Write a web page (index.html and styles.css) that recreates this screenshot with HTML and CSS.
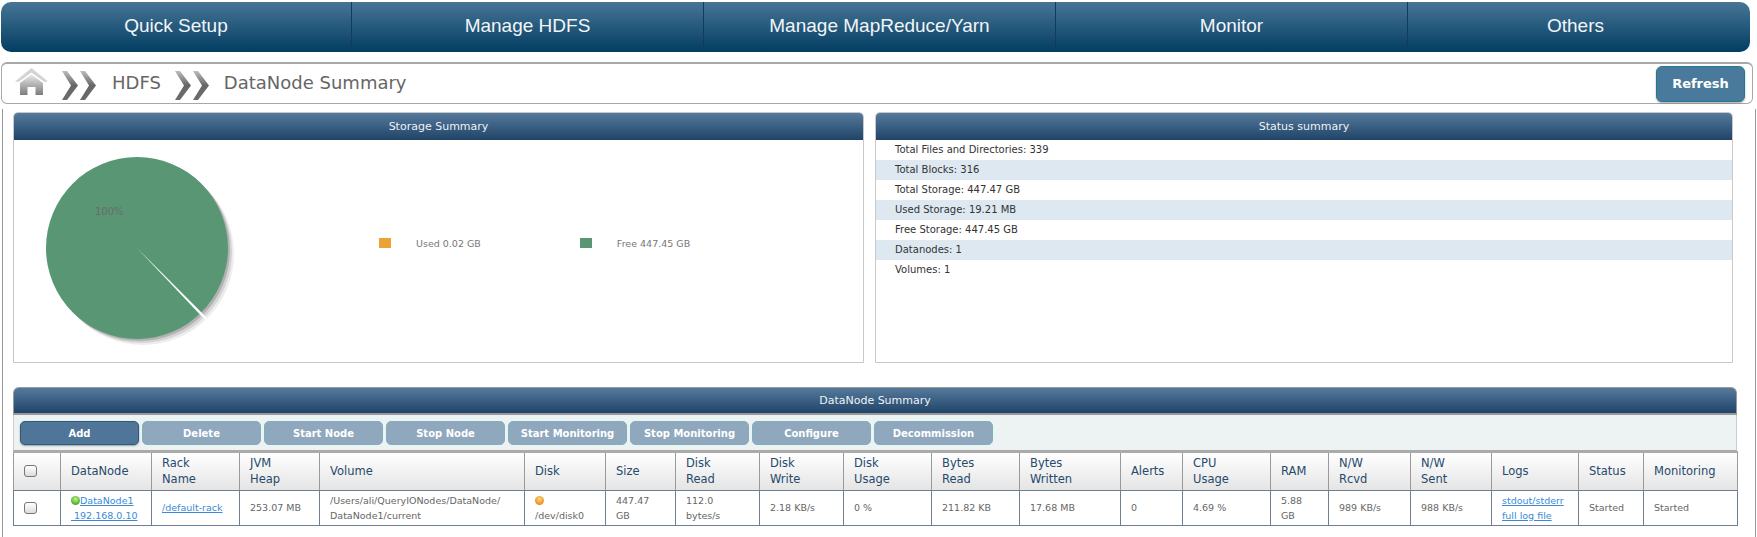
FILE: index.html
```html
<!DOCTYPE html>
<html lang="en">
<head>
<meta charset="utf-8">
<title>DataNode Summary</title>
<link rel="stylesheet" href="styles.css">
</head>
<body>
<nav class="topnav">
  <a class="topnav-item">Quick Setup</a>
  <a class="topnav-item">Manage HDFS</a>
  <a class="topnav-item">Manage MapReduce/Yarn</a>
  <a class="topnav-item">Monitor</a>
  <a class="topnav-item">Others</a>
</nav>
<header class="crumbs">
  <svg class="home" viewBox="0 0 33 27" aria-hidden="true">
    <defs>
      <linearGradient id="hg" x1="0" y1="0" x2="0" y2="1"><stop offset="0" stop-color="#e8e8e8"/><stop offset="1" stop-color="#7c7c7c"/></linearGradient>
    </defs>
    <path d="M16.5 0 L33 13.5 L29.5 14 L16.5 4.5 L3.5 14 L0 13.5 Z" fill="#d4d4d4"/>
    <path d="M16.5 6.5 L28 15 V27 H20.5 V19 H12.5 V27 H5 V15 Z" fill="url(#hg)"/>
  </svg>
  <svg class="chev" viewBox="0 0 34 29" aria-hidden="true">
    <defs>
      <linearGradient id="cg" x1="0" y1="0" x2="0" y2="1"><stop offset="0" stop-color="#bdbdbd"/><stop offset=".5" stop-color="#666"/><stop offset="1" stop-color="#6c6c6c"/></linearGradient>
    </defs>
    <path d="M0 0 H5 L16 14.5 L5 29 H0 L9 14.5 Z M18 0 H23 L34 14.5 L23 29 H18 L27 14.5 Z" fill="url(#cg)"/>
  </svg>
  <span class="crumb-text crumb-first">HDFS</span>
  <svg class="chev" viewBox="0 0 34 29" aria-hidden="true">
    <path d="M0 0 H5 L16 14.5 L5 29 H0 L9 14.5 Z M18 0 H23 L34 14.5 L23 29 H18 L27 14.5 Z" fill="url(#cg)"/>
  </svg>
  <span class="crumb-text crumb-last">DataNode Summary</span>
  <button class="refresh">Refresh</button>
</header>
<main class="content">
  <div class="panels">
    <section class="panel panel-storage">
      <h2 class="panel-title">Storage Summary</h2>
      <div class="storage-body">
        <div class="pie-wrap">
          <svg class="pie" viewBox="0 0 200 200" aria-hidden="true">
            <circle cx="97" cy="97" r="91" fill="#000" opacity=".07"/>
            <circle cx="95" cy="95" r="91" fill="#000" opacity=".1"/>
            <circle cx="93" cy="93" r="91" fill="#000" opacity=".16"/>
            <circle cx="91" cy="91" r="91" fill="#589674"/>
            <path d="M91 91 L161.5 165.5 L163.5 163.5 Z" fill="#fff"/>
          </svg>
          <span class="pie-label">100%</span>
        </div>
        <div class="legend">
          <div class="legend-item"><span class="swatch swatch-used"></span><span>Used 0.02 GB</span></div>
          <div class="legend-item"><span class="swatch swatch-free"></span><span>Free 447.45 GB</span></div>
        </div>
      </div>
    </section>
    <section class="panel panel-status">
      <h2 class="panel-title">Status summary</h2>
      <ul class="stats">
        <li>Total Files and Directories: 339</li>
        <li>Total Blocks: 316</li>
        <li>Total Storage: 447.47 GB</li>
        <li>Used Storage: 19.21 MB</li>
        <li>Free Storage: 447.45 GB</li>
        <li>Datanodes: 1</li>
        <li>Volumes: 1</li>
      </ul>
    </section>
  </div>
  <section class="summary">
    <h2 class="panel-title">DataNode Summary</h2>
    <div class="toolbar">
      <button class="tool tool-active">Add</button>
      <button class="tool">Delete</button>
      <button class="tool">Start Node</button>
      <button class="tool">Stop Node</button>
      <button class="tool">Start Monitoring</button>
      <button class="tool">Stop Monitoring</button>
      <button class="tool">Configure</button>
      <button class="tool">Decommission</button>
    </div>
    <table class="grid">
      <colgroup>
        <col class="c1"><col class="c2"><col class="c3"><col class="c4"><col class="c5">
        <col class="c6"><col class="c7"><col class="c8"><col class="c9"><col class="c10">
        <col class="c11"><col class="c12"><col class="c13"><col class="c14"><col class="c15">
        <col class="c16"><col class="c17"><col class="c18"><col class="c19"><col class="c20">
      </colgroup>
      <thead>
        <tr>
          <th class="check"><span class="box"></span></th>
          <th>DataNode</th><th>Rack<br>Name</th><th>JVM<br>Heap</th><th>Volume</th>
          <th>Disk</th><th>Size</th><th>Disk<br>Read</th><th>Disk<br>Write</th><th>Disk<br>Usage</th>
          <th>Bytes<br>Read</th><th>Bytes<br>Written</th><th>Alerts</th><th>CPU<br>Usage</th><th>RAM</th>
          <th>N/W<br>Rcvd</th><th>N/W<br>Sent</th><th>Logs</th><th>Status</th><th>Monitoring</th>
        </tr>
      </thead>
      <tbody>
        <tr>
          <td class="check"><span class="box"></span></td>
          <td><a href="#"><span class="dot dot-green"></span>DataNode1<br>&nbsp;192.168.0.10</a></td>
          <td><a href="#">/default-rack</a></td>
          <td>253.07 MB</td>
          <td>/Users/ali/QueryIONodes/DataNode/<br>DataNode1/current</td>
          <td><span class="dot dot-orange"></span><br>/dev/disk0</td>
          <td>447.47<br>GB</td>
          <td>112.0<br>bytes/s</td>
          <td>2.18 KB/s</td>
          <td>0 %</td>
          <td>211.82 KB</td>
          <td>17.68 MB</td>
          <td>0</td>
          <td>4.69 %</td>
          <td>5.88<br>GB</td>
          <td>989 KB/s</td>
          <td>988 KB/s</td>
          <td><a href="#">stdout/stderr</a><br><a href="#">full log file</a></td>
          <td>Started</td>
          <td>Started</td>
        </tr>
      </tbody>
    </table>
  </section>
</main>
</body>
</html>
```
FILE: styles.css
```css
* { box-sizing: border-box; }
html, body { height: 100%; }
body {
  margin: 0;
  padding: 2px 2px 0 1px;
  background: #fff;
  font-family: "DejaVu Sans", sans-serif;
  overflow: hidden;
  display: flex;
  flex-direction: column;
}
.topnav {
  display: flex;
  width: 1749px;
  height: 50px;
  border-radius: 10px;
  background: linear-gradient(#477596, #023d62);
  flex: none;
}
.topnav-item {
  width: 352px;
  flex: none;
  display: flex;
  align-items: center;
  justify-content: center;
  padding-bottom: 2px;
  color: #f2f5f7;
  font: 19px "Liberation Sans", Arial, sans-serif;
  border-left: 1px solid #0f3c5f;
}
.topnav-item:first-child { border-left: 0; width: 350px; }
.topnav-item:last-child { flex: 1; width: auto; padding-right: 7px; }
.crumbs {
  flex: none;
  margin-top: 10px;
  width: 1752px;
  height: 42px;
  display: flex;
  align-items: center;
  padding: 0 7px 0 13px;
  border: 1px solid #a8a8a8;
  border-top-width: 2px;
  border-radius: 6px;
  background: #fff;
}
.home { width: 33px; height: 27px; margin-right: 14px; margin-top: -5px; }
.chev { width: 34px; height: 29px; margin-top: 3px; }
.crumb-text {
  color: #666;
  font-size: 18px;
  position: relative;
  top: -1px;
}
.crumb-first { margin: 0 14px 0 16px; }
.crumb-last { margin-left: 15px; }
.refresh {
  margin-left: auto;
  width: 89px;
  height: 36px;
  border: 1px solid #1f7a94;
  border-radius: 6px;
  background: #4a7a9b;
  box-shadow: 0 1px 2px rgba(0,0,0,.35);
  color: #fff;
  font: bold 13px "DejaVu Sans", sans-serif;
}
.content {
  flex: 1;
  width: 1754px;
  margin-top: 5px;
  padding: 3px 17px 0 10px;
  border-left: 1px solid #999;
  border-right: 1px solid #999;
  margin-left: 1px;
}
.panels { display: flex; gap: 11px; }
.panel {
  height: 251px;
  border: 1px solid #c8c8c8;
  border-radius: 5px 5px 0 0;
  background: #fff;
}
.panel-storage { width: 851px; }
.panel-status { width: 858px; }
.panel-title {
  margin: 0;
  height: 27px;
  display: flex;
  align-items: center;
  justify-content: center;
  background: linear-gradient(#567a9c, #1f4468);
  border-radius: 4px 4px 0 0;
  color: #eef2f5;
  font-size: 11px;
  font-weight: normal;
}
.storage-body { display: flex; position: relative; height: 222px; }
.pie-wrap { position: absolute; left: 32px; top: 17px; width: 200px; height: 200px; }
.pie { width: 200px; height: 200px; display: block; }
.pie-label {
  position: absolute;
  left: 49px;
  top: 49px;
  color: #6b6b6b;
  font-size: 10px;
}
.legend {
  margin-left: 365px;
  padding-top: 98px;
  display: flex;
  gap: 99px;
  color: #777;
  font-size: 9.5px;
}
.legend-item { display: flex; align-items: center; gap: 25px; height: 10px; }
.swatch { width: 12px; height: 10px; flex: none; }
.swatch-used { background: #eba335; }
.swatch-free { background: #589674; }
.stats { list-style: none; margin: 0; padding: 0; }
.stats li {
  height: 20px;
  line-height: 20px;
  padding-left: 19px;
  color: #333;
  font-size: 10px;
}
.stats li:nth-child(even) { background: #dde8f1; }
.summary { margin-top: 24px; width: 1724px; }
.summary .panel-title {
  height: 28px;
  border: 1px solid #999;
  border-bottom: 2px solid #999;
  border-radius: 6px 6px 0 0;
}
.toolbar {
  display: flex;
  gap: 3px;
  height: 36px;
  padding: 6px 0 0 6px;
  background: #edf3f3;
  border-left: 1px solid #ccc;
  border-right: 1px solid #ccc;
  border-bottom: 1px solid #aaa;
}
.tool {
  width: 119px;
  height: 24px;
  padding: 0;
  border: 1px solid #7fb0bd;
  border-radius: 5px;
  background: #8fa8be;
  color: #fff;
  font: bold 10px "DejaVu Sans", sans-serif;
}
.tool-active {
  background: #4f7598;
  border-color: #2b5a7c;
  box-shadow: 0 1px 2px rgba(0,0,0,.35);
}
.grid {
  width: 1724px;
  table-layout: fixed;
  border-collapse: collapse;
  border-top: 2px solid #aaa;
}
.grid th, .grid td {
  border: 1px solid #6f7f90;
  text-align: left;
  padding: 0 9px 0 10px;
  overflow: hidden;
}
.grid th {
  height: 38px;
  border-color: #9a9a9a;
  border-bottom-color: #6f7f90;
  background: linear-gradient(#fff, #e4e4e4);
  color: #274a6b;
  font-size: 11.5px;
  font-weight: normal;
  line-height: 16px;
}
.grid td {
  height: 35px;
  color: #666;
  font-size: 9.5px;
  line-height: 15px;
  white-space: nowrap;
}
.grid a { color: #3a8ad8; text-decoration: underline; }
.grid .check { padding: 0 0 0 10px; }
.box {
  display: block;
  width: 13px;
  height: 12px;
  border: 1px solid #777;
  border-radius: 3px;
  background: linear-gradient(#fff, #dcdcdc);
}
.dot {
  display: inline-block;
  width: 9px;
  height: 9px;
  border-radius: 50%;
  vertical-align: -1px;
}
.dot-green { background: radial-gradient(circle at 50% 35%, #c6f08a, #4fae2a 70%); }
.dot-orange { background: radial-gradient(circle at 50% 35%, #fbd78a, #ee8f1e 70%); }
.c1 { width: 47px; } .c2 { width: 91px; } .c3 { width: 88px; } .c4 { width: 80px; }
.c5 { width: 205px; } .c6 { width: 81px; } .c7 { width: 70px; } .c8 { width: 84px; }
.c9 { width: 84px; } .c10 { width: 88px; } .c11 { width: 88px; } .c12 { width: 101px; }
.c13 { width: 62px; } .c14 { width: 88px; } .c15 { width: 58px; } .c16 { width: 82px; }
.c17 { width: 81px; } .c18 { width: 87px; } .c19 { width: 65px; } .c20 { width: 94px; }
```
